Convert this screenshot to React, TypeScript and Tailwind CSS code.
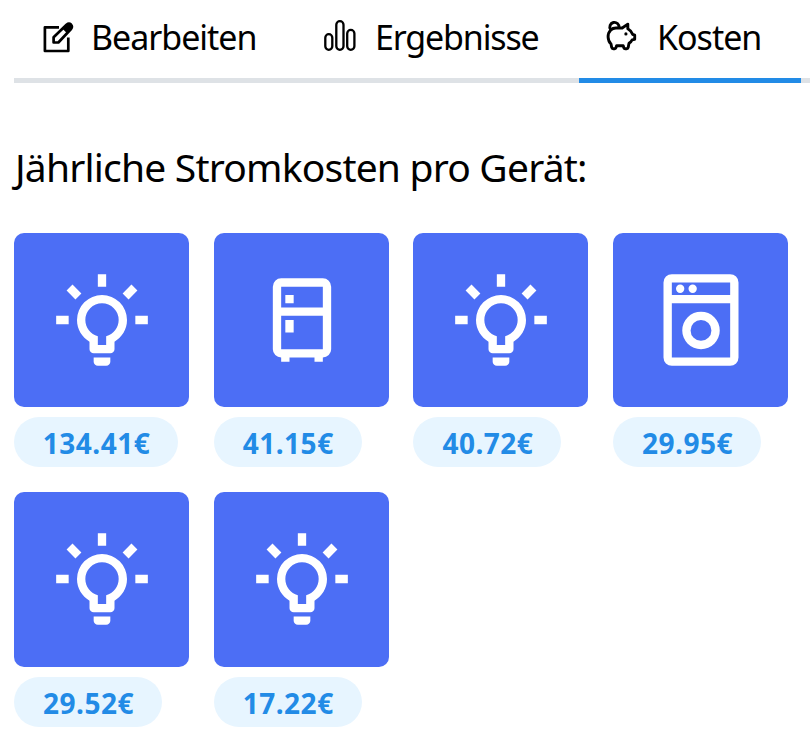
import { ReactNode } from "react";

const BULB =
  "M20,11H23V13H20V11M1,11H4V13H1V11M13,1V4H11V1H13M4.92,3.5L7.05,5.64L5.63,7.05L3.5,4.93L4.92,3.5M16.95,5.63L19.07,3.5L20.5,4.93L18.37,7.05L16.95,5.63M12,6A6,6 0 0,1 18,12C18,14.22 16.79,16.16 15,17.2V19A1,1 0 0,1 14,20H10A1,1 0 0,1 9,19V17.2C7.21,16.16 6,14.22 6,12A6,6 0 0,1 12,6M14,21V22A1,1 0 0,1 13,23H11A1,1 0 0,1 10,22V21H14M11,18H13V15.87C14.73,15.43 16,13.86 16,12A4,4 0 0,0 12,8A4,4 0 0,0 8,12C8,13.86 9.27,15.43 11,15.87V18Z";
const FRIDGE =
  "M7,2H17A2,2 0 0,1 19,4V19A2,2 0 0,1 17,21V22H15V21H9V22H7V21A2,2 0 0,1 5,19V4A2,2 0 0,1 7,2M7,4V9H17V4H7M7,19H17V11H7V19M8,12H10V15H8V12M8,6H10V8H8V6Z";
const WASHER =
  "M5,1H19A2,2 0 0,1 21,3V21A2,2 0 0,1 19,23H5A2,2 0 0,1 3,21V3A2,2 0 0,1 5,1M5,3V6H19V3H5M5,8V21H19V8H5M7,3.5A1,1 0 0,1 7,5.5A1,1 0 0,1 7,3.5M10,3.5A1,1 0 0,1 10,5.5A1,1 0 0,1 10,3.5M12,10A4.5,4.5 0 0,1 12,19A4.5,4.5 0 0,1 12,10M12,12A2.5,2.5 0 0,0 12,17A2.5,2.5 0 0,0 12,12Z";

const devices = [
  { icon: BULB, cost: "134.41€", tile: "h-[174px]", width: "w-[164px]" },
  { icon: FRIDGE, cost: "41.15€", tile: "h-[174px] pl-px", width: "w-[148px]" },
  { icon: BULB, cost: "40.72€", tile: "h-[174px]", width: "w-[148px]" },
  { icon: WASHER, cost: "29.95€", tile: "h-[174px]", width: "w-[148px]" },
  { icon: BULB, cost: "29.52€", tile: "h-[175px] pb-px", width: "w-[148px]" },
  { icon: BULB, cost: "17.22€", tile: "h-[175px] pb-px pl-px", width: "w-[148px]" },
];

function EditIcon() {
  return (
    <svg width="32" height="32" viewBox="0 0 32 32" fill="none" stroke="currentColor" strokeWidth="2.7" strokeLinejoin="round">
      <path d="M17 6.3H2.9V30H26.3V16.5" />
      <path d="M11.6 21.5V16.2L24.5 3.8Q27 1.8 29 3.6Q30.800 5.500 29 8L16.400 21.500Z" />
      <path d="M20.500 7.800L25 12.200L29.500 7.500Q31 5 29.200 3.300Q27.300 1.600 25 3.600Z" fill="currentColor" stroke="none" />
    </svg>
  );
}

function BarsIcon() {
  return (
    <svg width="32" height="34" viewBox="0 0 32 34" fill="none" stroke="currentColor" strokeWidth="2.3">
      <rect x="1.3" y="15.2" width="7" height="15.6" rx="3.5" />
      <rect x="12.3" y="2.2" width="7.2" height="28.6" rx="3.6" />
      <rect x="23.2" y="10.9" width="7.2" height="19.9" rx="3.6" />
    </svg>
  );
}

function PigIcon() {
  return (
    <svg width="32" height="32" viewBox="0 0 32 32" fill="none" stroke="currentColor" strokeWidth="2.9" strokeLinejoin="round">
      <path d="M4.8 10Q2 12.7 2.1 17Q2.3 21.5 5 24L5.7 27.5Q6 28.7 7.2 28.7H8.7Q9.7 28.7 10 27.7L10.6 25.8H17.2L17.8 27.7Q18.2 28.7 19.2 28.7H20.7Q21.900 28.700 22.200 27.500L23 23.300Q25.300 21.900 26.200 19.800L28.700 19.300V15.200L26.600 14.300Q25.400 10.700 21.800 8.700V4.100L16.200 8H10Q6.700 8 4.800 10Z" />
      <path d="M4.600 9.500A4.600 4.600 0 1 1 13 7.500" />
      <circle cx="19.900" cy="13.900" r="1.600" fill="currentColor" stroke="none" />
    </svg>
  );
}

function Tab({ icon, label, className }: { icon: ReactNode; label: string; className: string }) {
  return (
    <div role="tab" className={`flex h-[83px] shrink-0 items-start border-b-[5px] ${className}`}>
      {icon}
      <span className="whitespace-nowrap">{label}</span>
    </div>
  );
}

export default function App() {
  return (
    <main className="h-[755px] w-full overflow-hidden bg-white pl-3.5 font-['Noto_Sans',sans-serif] text-black">
      <div role="tablist" className="flex h-[83px] w-[796px] text-[34px] leading-[75px]">
        <Tab label="Bearbeiten" className="w-[282px] gap-[17px] border-[#dee2e6] pl-7 tracking-[-1.03px] [&>svg]:mt-[21px]" icon={<EditIcon />} />
        <Tab label="Ergebnisse" className="w-[283px] gap-[19px] border-[#dee2e6] pl-7 tracking-[-1.15px] [&>svg]:mt-[19px]" icon={<BarsIcon />} />
        <Tab label="Kosten" className="w-[222px] gap-[19px] border-[#228be6] pl-[27px] tracking-[-1px] [&>svg]:mt-[20px]" icon={<PigIcon />} />
        <div className="flex-1 border-b-[5px] border-[#dee2e6]" />
      </div>
      <h1 className="mt-[53px] h-[61px] whitespace-nowrap pl-px text-[39px] leading-[61px] tracking-[-0.8px]">Jährliche Stromkosten pro Gerät:</h1>
      <section className="mt-[36px] grid w-[775px] grid-cols-[repeat(4,175px)] gap-x-[24.7px] gap-y-[25px]">
        {devices.map((d, i) => (
          <article key={i} className="flex flex-col items-start">
            <div className={`flex w-[175px] items-center justify-center rounded-[10px] bg-[#4c6ef5] ${d.tile}`}>
              <svg width="100" height="100" viewBox="0 0 24 24" fill="white" fillRule={d.icon === BULB ? "nonzero" : "evenodd"}>
                <path d={d.icon} />
              </svg>
            </div>
            <div className={`mt-2.5 flex h-[50px] items-center justify-center rounded-full bg-[#e7f5ff] pt-0.5 pl-px text-[28px] font-bold tracking-[0.5px] text-[#228be6] ${d.width}`}>
              <span>{d.cost}</span>
            </div>
          </article>
        ))}
      </section>
    </main>
  );
}
